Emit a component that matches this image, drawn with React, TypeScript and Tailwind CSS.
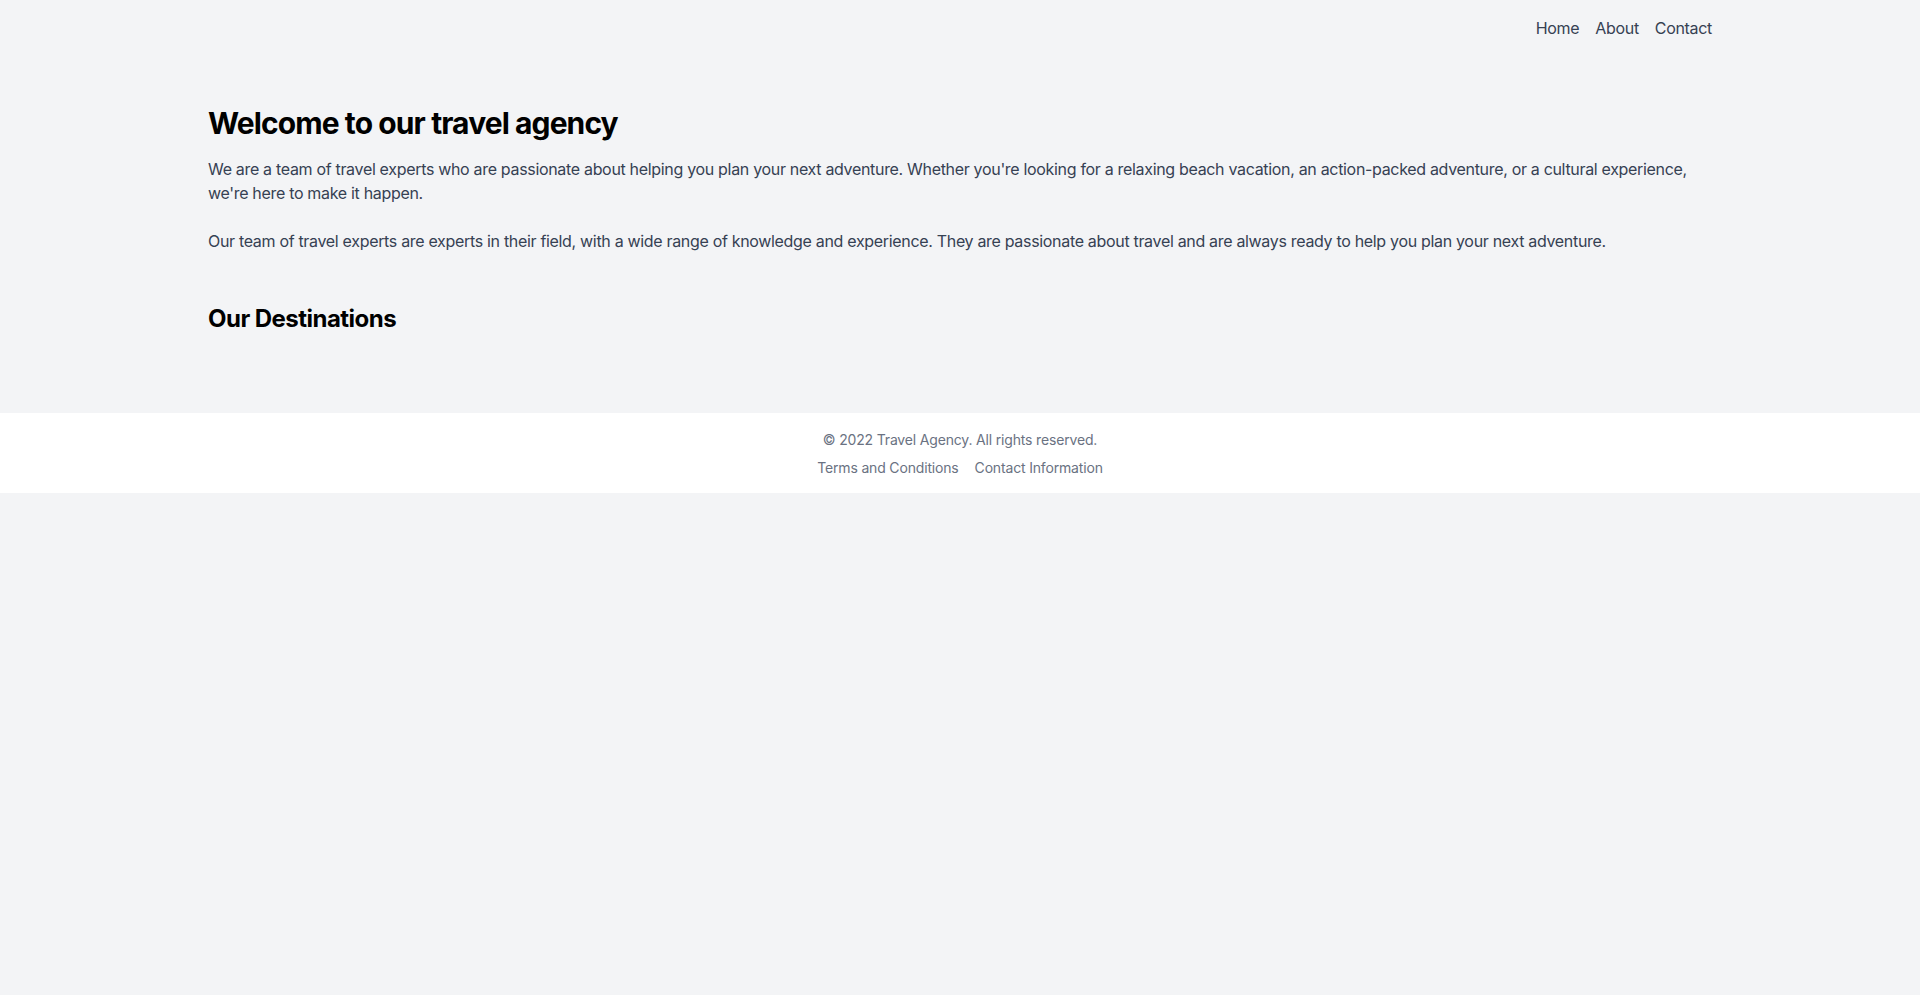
export default function App() {
  return (
    <div className="min-h-screen bg-gray-100 font-['Inter',sans-serif]">
      <nav className="container mx-auto px-4 py-4 flex justify-end">
        <ul className="flex space-x-4 text-gray-700 tracking-[-0.02em]">
          <li>
            <a href="#">Home</a>
          </li>
          <li>
            <a href="#">About</a>
          </li>
          <li>
            <a href="#">Contact</a>
          </li>
        </ul>
      </nav>

      <main className="container mx-auto px-4 pt-[49px] pb-12">
        <h1 className="text-3xl font-bold mb-4 tracking-[-0.03em]">Welcome to our travel agency</h1>
        <p className="text-gray-700 mb-6 tracking-[-0.02em]">
          We are a team of travel experts who are passionate about helping you plan your next adventure. Whether you're
          looking for a relaxing beach vacation, an action-packed adventure, or a cultural experience, we're here to make it
          happen.
        </p>
        <p className="text-gray-700 tracking-[-0.02em]">
          Our team of travel experts are experts in their field, with a wide range of knowledge and experience. They are
          passionate about travel and are always ready to help you plan your next adventure.
        </p>

        <section className="mt-[50px]">
          <h2 className="text-2xl font-bold mb-[30px] tracking-[-0.022em]">Our Destinations</h2>
          <div className="grid grid-cols-3 gap-4"></div>
        </section>
      </main>

      <footer className="bg-white pt-[17px] pb-[15px] text-center text-sm text-gray-500 tracking-[-0.012em]">
        <p>© 2022 Travel Agency. All rights reserved.</p>
        <div className="mt-2 flex justify-center space-x-4">
          <a href="#">Terms and Conditions</a>
          <a href="#">Contact Information</a>
        </div>
      </footer>
    </div>
  );
}
